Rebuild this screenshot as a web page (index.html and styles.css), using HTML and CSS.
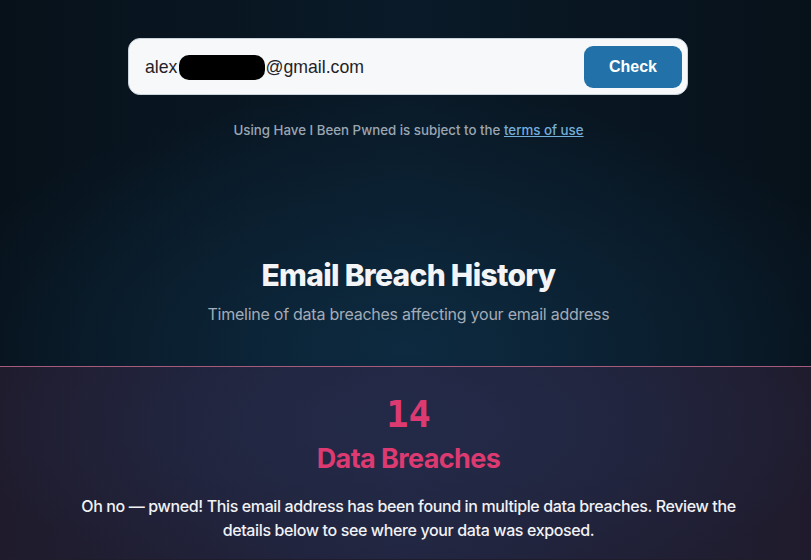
FILE: index.html
```html
<!DOCTYPE html>
<html lang="en">
<head>
<meta charset="utf-8">
<title>Email Breach History</title>
<link rel="stylesheet" href="styles.css">
</head>
<body>
<section class="hero">
  <form class="search">
    <div class="search-value">alex<span class="redact"></span>@gmail.com</div>
    <button type="button" class="check-btn">Check</button>
  </form>
  <p class="terms">Using Have I Been Pwned is subject to the <a href="#">terms of use</a></p>
  <h1 class="title">Email Breach History</h1>
  <p class="subtitle">Timeline of data breaches affecting your email address</p>
</section>
<section class="results">
  <div class="count">14</div>
  <h2 class="count-label">Data Breaches</h2>
  <p class="message">Oh no — pwned! This email address has been found in multiple data breaches. Review the details below to see where your data was exposed.</p>
</section>
</body>
</html>
```
FILE: styles.css
```css
html, body {
  margin: 0;
  padding: 0;
}
body {
  width: 811px;
  height: 560px;
  overflow: hidden;
  font-family: Inter, "Noto Sans", sans-serif;
  background: #1f1c2b;
}
.hero {
  height: 367px;
  box-sizing: border-box;
  padding: 38px 0 0 6px;
  display: flex;
  flex-direction: column;
  align-items: center;
  background:
    radial-gradient(ellipse 60% 70% at 50% 95%, #0d2a40 0%, rgba(13,42,64,0) 100%),
    linear-gradient(90deg, #07111a 0%, #0a1a28 50%, #07111a 100%);
  border-bottom: 1px solid #a85a7a;
}
.search {
  width: 560px;
  height: 57px;
  box-sizing: border-box;
  margin: 0 0 0 -1px;
  background: #f6f8fa;
  border: 1px solid #c9d3dc;
  border-radius: 12px;
  display: flex;
  align-items: center;
  justify-content: space-between;
  padding: 0 5px 0 16px;
}
.search-value {
  font-family: "Liberation Sans", Arial, sans-serif;
  font-size: 17.7px;
  color: #1f2328;
  display: flex;
  align-items: center;
  padding-top: 1px;
}
.redact {
  display: inline-block;
  width: 86px;
  height: 25px;
  background: #000;
  border-radius: 10px;
  margin-left: 2px;
}
.check-btn {
  width: 98px;
  height: 42px;
  border: 0;
  border-radius: 9px;
  background: #2272a9;
  color: #fff;
  font-family: "Liberation Sans", Arial, sans-serif;
  font-weight: 700;
  font-size: 16px;
  padding: 0;
}
.terms {
  margin: 27px 0 0;
  font-size: 13.3px;
  font-weight: 500;
  color: #9ba6b2;
}
.terms a {
  color: #74aedb;
  text-decoration: underline;
}
.title {
  margin: 119px 0 0;
  font-size: 30px;
  font-weight: 800;
  color: #f3f4f6;
  letter-spacing: -0.7px;
  line-height: 36px;
}
.subtitle {
  margin: 11px 0 0;
  font-size: 16px;
  color: #a3acb7;
  letter-spacing: -0.25px;
}
.results {
  height: 192px;
  box-sizing: border-box;
  padding: 28px 0 0 6px;
  text-align: center;
  background:
    radial-gradient(ellipse 55% 90% at 50% 30%, #232a48 0%, rgba(35,42,72,0) 100%),
    linear-gradient(90deg, #1f1b2c 0%, #212540 50%, #1f1b2c 100%);
}
.count {
  font-family: "DejaVu Sans Mono", monospace;
  font-size: 37px;
  font-weight: 700;
  color: #dc3a70;
  line-height: 40px;
}
.count-label {
  margin: 7px 0 0;
  font-size: 27px;
  font-weight: 700;
  color: #dc3a70;
  letter-spacing: -0.6px;
  line-height: 34px;
}
.message {
  margin: 18px auto 0;
  width: 690px;
  font-size: 16px;
  line-height: 24px;
  color: #f1f2f5;
  font-weight: 500;
  letter-spacing: -0.37px;
}
```
